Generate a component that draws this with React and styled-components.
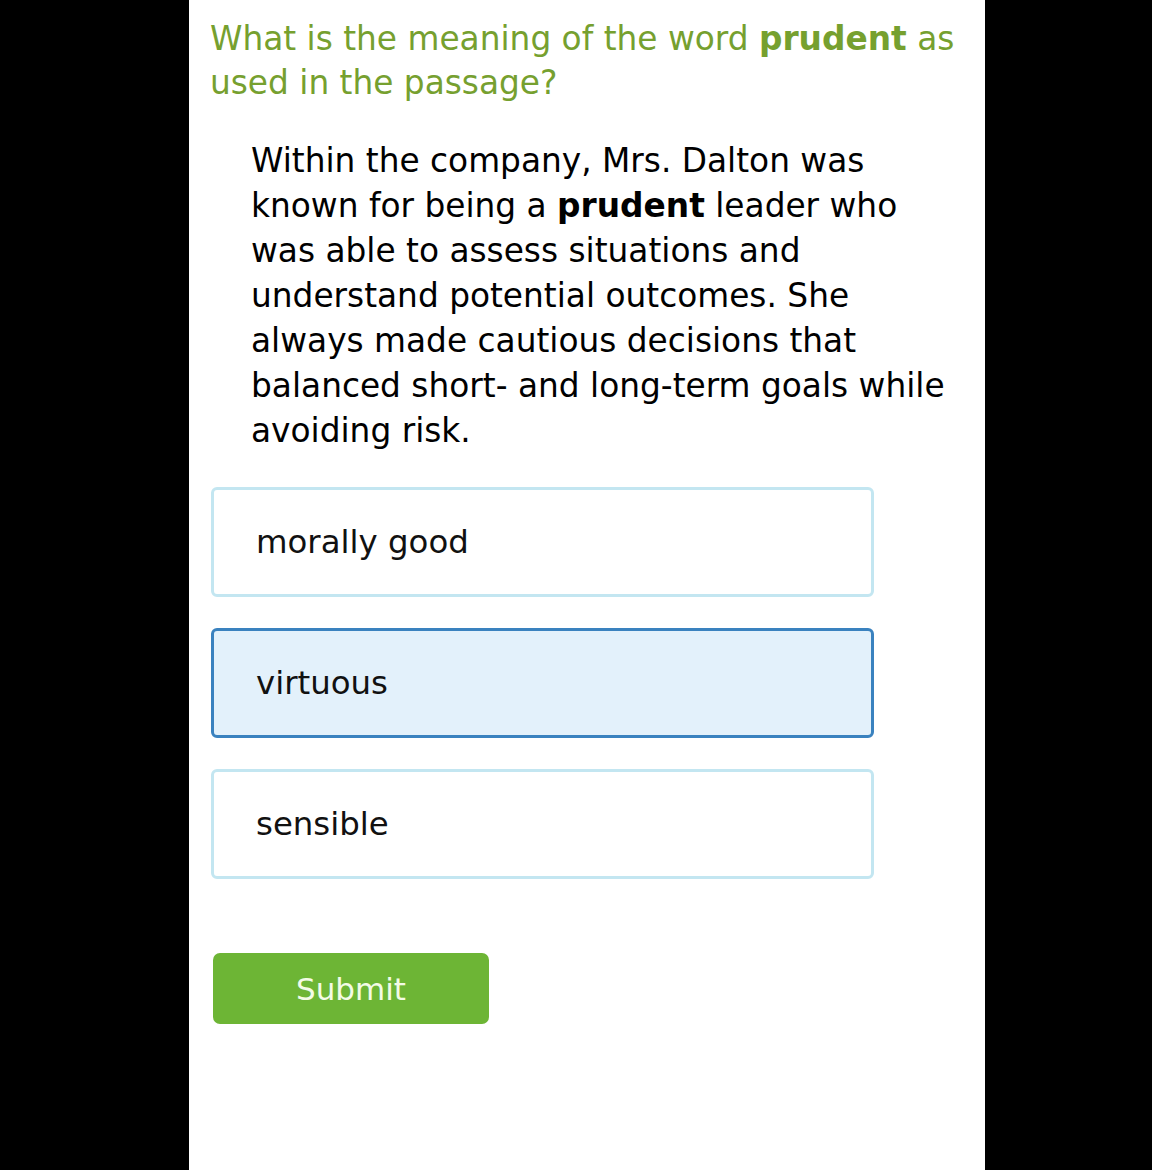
import React from "react";
import styled, { createGlobalStyle } from "styled-components";

const GlobalStyle = createGlobalStyle`
    html, body {
        margin: 0;
        padding: 0;
        background: #000;
    }
`;

const Page = styled.div`
    display: flex;
    justify-content: flex-start;
    min-height: 1170px;
    background: #000;
`;

const Panel = styled.div`
    margin-left: 189px;
    width: 796px;
    min-height: 1170px;
    background: #fff;
    padding: 17px 0 0 21px;
    box-sizing: border-box;
    font-family: "DejaVu Sans", Verdana, sans-serif;
`;

const Question = styled.h2`
    margin: 0;
    font-size: 32.8px;
    font-weight: normal;
    line-height: 44px;
    color: #76a02f;
    white-space: nowrap;

    b {
        font-weight: bold;
    }
`;

const Passage = styled.p`
    margin: 34px 0 0 41px;
    font-size: 32.8px;
    line-height: 45px;
    color: #000;
    white-space: nowrap;
`;

const Options = styled.div`
    display: flex;
    flex-direction: column;
    gap: 31px;
    margin: 33px 0 0 1px;
    width: 663px;
`;

const Option = styled.div`
    display: flex;
    align-items: center;
    height: 110px;
    box-sizing: border-box;
    padding-left: 42px;
    border: 3px solid ${(p) => (p.selected ? "#3a82bf" : "#c3e6f1")};
    border-radius: 6px;
    background: ${(p) => (p.selected ? "#e3f1fb" : "#fff")};
    font-size: 32.4px;
    color: #111;
`;

const SubmitButton = styled.button`
    display: block;
    margin: 74px 0 0 3px;
    width: 276px;
    height: 71px;
    border: none;
    border-radius: 7px;
    background: #6db535;
    color: #f3fbe6;
    font-family: "DejaVu Sans", Verdana, sans-serif;
    font-size: 31px;
    cursor: pointer;
`;

const answers = ["morally good", "virtuous", "sensible"];

const App = () => {
    return (
        <Page>
            <GlobalStyle />
            <Panel>
                <Question>
                    What is the meaning of the word <b>prudent</b> as
                    <br />
                    used in the passage?
                </Question>
                <Passage>
                    Within the company, Mrs. Dalton was<br />
                    known for being a <b>prudent</b> leader who<br />
                    was able to assess situations and<br />
                    understand potential outcomes. She<br />
                    always made cautious decisions that<br />
                    balanced short- and long-term goals while<br />
                    avoiding risk.
                </Passage>
                <Options>
                    {answers.map((a) => (
                        <Option key={a} selected={a === "virtuous"}>
                            {a}
                        </Option>
                    ))}
                </Options>
                <SubmitButton type="button">Submit</SubmitButton>
            </Panel>
        </Page>
    );
};

export default App;
